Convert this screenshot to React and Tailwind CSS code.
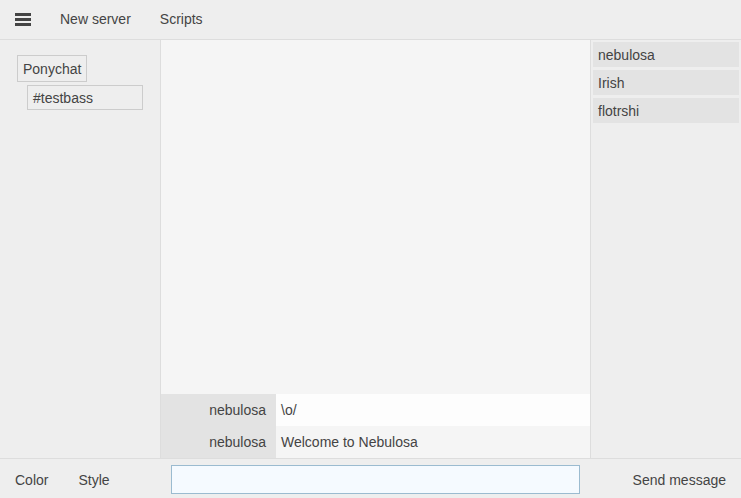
import React from 'react';

const users = ['nebulosa', 'Irish', 'flotrshi'];
const messages = [
  { nick: 'nebulosa', text: '\\o/', bg: 'bg-[#fdfdfd]' },
  { nick: 'nebulosa', text: 'Welcome to Nebulosa', bg: 'bg-[#f5f5f5]' },
];

const App = () => {
  return (
    <div className="flex h-[498px] w-[741px] flex-col bg-[#eeeeee] text-[14px] text-[#444444]" style={{ fontFamily: '"Liberation Sans", Arial, sans-serif' }}>
      <div className="flex h-[40px] shrink-0 items-center border-b border-[#dddddd]">
        <button className="ml-[15px] mt-[-1px] flex w-[16px] flex-col gap-[2px]">
          <span className="h-[3px] bg-[#444444]" />
          <span className="h-[3px] bg-[#444444]" />
          <span className="h-[3px] bg-[#444444]" />
        </button>
        <span className="ml-[29px]">New server</span>
        <span className="ml-[29px]">Scripts</span>
      </div>

      <div className="flex min-h-0 flex-1">
        <div className="w-[161px] shrink-0 border-r border-[#dddddd] pl-[17px] pt-[15px]">
          <div className="inline-block h-[27px] border border-[#cccccc] px-[5px] leading-[27px]">Ponychat</div>
          <div className="ml-[10px] mt-[3px] h-[25px] w-[116px] border border-[#cccccc] px-[5px] leading-[24px]">#testbass</div>
        </div>

        <div className="flex w-[430px] shrink-0 flex-col justify-end border-r border-[#dddddd] bg-[#f5f5f5]">
          {messages.map((m, i) => (
            <div key={i} className={`flex h-[32px] items-center ${m.bg}`}>
              <div className="flex h-full w-[115px] items-center justify-end bg-[#e3e3e3] pr-[10px]">{m.nick}</div>
              <div className="pl-[5px]">{m.text}</div>
            </div>
          ))}
        </div>

        <div className="flex flex-1 flex-col gap-[3px] px-[2px] pt-[2px]">
          {users.map(u => (
            <div key={u} className="h-[25px] bg-[#e3e3e3] px-[5px] leading-[27px]">{u}</div>
          ))}
        </div>
      </div>

      <div className="flex h-[40px] shrink-0 items-center border-t border-[#dddddd]">
        <span className="ml-[15px] pt-[3px]">Color</span>
        <span className="ml-[30px] pt-[3px]">Style</span>
        <input className="ml-[61px] mt-[2px] h-[29px] w-[409px] border border-[#9bbbd0] bg-[#f5faff] outline-none" />
        <span className="ml-auto mr-[15px] pt-[3px]">Send message</span>
      </div>
    </div>
  );
};

export default App;
